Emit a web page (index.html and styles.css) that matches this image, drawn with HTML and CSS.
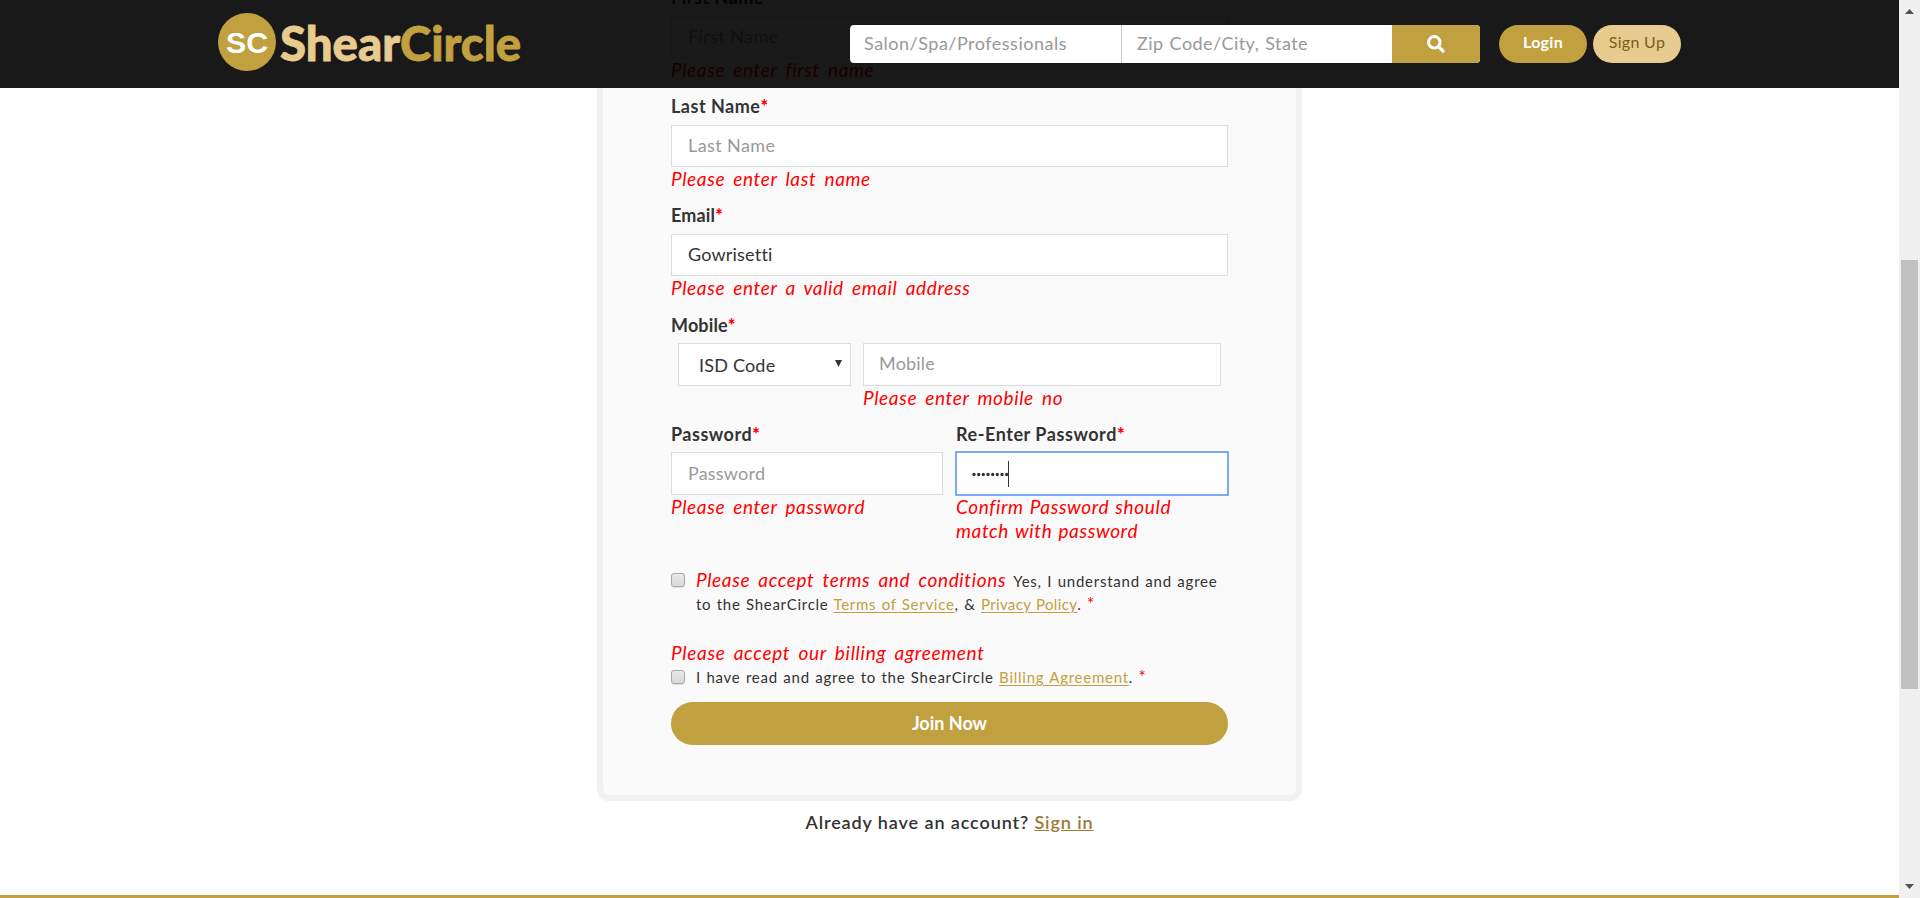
FILE: index.html
```html
<!DOCTYPE html>
<html lang="en">
<head>
<meta charset="utf-8">
<title>ShearCircle - Join</title>
<link rel="stylesheet" href="styles.css">
</head>
<body>
<div class="page">
  <header class="header">
    <svg class="logo" width="306" height="60" viewBox="0 0 306 60" role="img" aria-label="ShearCircle">
      <circle cx="29" cy="29" r="29" fill="#c1a03f"/>
      <text class="logo-mark" x="8" y="39.500" textLength="42" lengthAdjust="spacingAndGlyphs">SC</text>
      <text class="logo-text" x="62" y="47.500" textLength="120" lengthAdjust="spacingAndGlyphs" fill="#e8cb8f" stroke="#e8cb8f">Shear</text>
      <text class="logo-text" x="182" y="47.500" textLength="121" lengthAdjust="spacingAndGlyphs" fill="#c1a03f" stroke="#c1a03f">Circle</text>
    </svg>
    <div class="search">
      <div class="search-field what">Salon/Spa/Professionals</div>
      <div class="search-field where">Zip Code/City, State</div>
      <div class="search-button">
        <svg width="18" height="18" viewBox="0 0 18 18" fill="none" stroke="#fff">
          <circle cx="7.300" cy="7.300" r="5.700" stroke-width="3"/>
          <path d="M11.500 11.500L16 16" stroke-width="3.200" stroke-linecap="round"/>
        </svg>
      </div>
    </div>
    <div class="pill login">Login</div>
    <div class="pill signup">Sign Up</div>
  </header>

  <main class="main">
    <section class="card">
      <div class="field">
        <div class="label">First Name<b>*</b></div>
        <div class="input hint name">First Name</div>
        <div class="error">Please enter first name</div>
      </div>
      <div class="field">
        <div class="label">Last Name<b>*</b></div>
        <div class="input hint name">Last Name</div>
        <div class="error">Please enter last name</div>
      </div>
      <div class="field">
        <div class="label short">Email<b>*</b></div>
        <div class="input">Gowrisetti</div>
        <div class="error">Please enter a valid email address</div>
      </div>
      <div class="field">
        <div class="label short">Mobile<b>*</b></div>
        <div class="phone">
          <div class="input tall select">ISD Code
            <svg width="7" height="7" viewBox="0 0 7 7"><path d="M0 0H7L3.500 7Z" fill="#333"/></svg>
          </div>
          <div>
            <div class="input tall hint">Mobile</div>
            <div class="error">Please enter mobile no</div>
          </div>
        </div>
      </div>
      <div class="passwords">
        <div>
          <div class="label">Password<b>*</b></div>
          <div class="input tall hint">Password</div>
          <div class="error">Please enter password</div>
        </div>
        <div>
          <div class="label long">Re-Enter Password<b>*</b></div>
          <div class="input tall focus">
            <svg width="38" height="26" viewBox="0 0 38 26" fill="#333">
              <circle cx="2" cy="13.500" r="1.650"/><circle cx="6.700" cy="13.500" r="1.650"/><circle cx="11.300" cy="13.500" r="1.650"/><circle cx="16" cy="13.500" r="1.650"/><circle cx="20.700" cy="13.500" r="1.650"/><circle cx="25.300" cy="13.500" r="1.650"/><circle cx="30" cy="13.500" r="1.650"/><circle cx="34.700" cy="13.500" r="1.650"/>
              <path d="M36 0h1v26h-1z"/>
            </svg>
          </div>
          <div class="error tight">Confirm Password should<br>match with password</div>
        </div>
      </div>
      <div class="terms">
        <i class="box"></i>
        <div>
          <div class="line"><span class="error">Please accept terms and conditions</span><span class="gap">Yes, I understand and agree</span></div>
          <div class="line">to the ShearCircle <a>Terms of Service</a>, &amp; <a class="policy">Privacy Policy</a>. <b>*</b></div>
        </div>
      </div>
      <div class="error billing">Please accept our billing agreement</div>
      <div class="terms last">
        <i class="box"></i>
        <div class="line">I have read and agree to the ShearCircle <a>Billing Agreement</a>. <b>*</b></div>
      </div>
      <div class="join">Join Now</div>
    </section>
    <p class="already">Already have an account? <a>Sign in</a></p>
  </main>
  <footer class="footer"></footer>
</div>
<aside class="scrollbar">
  <svg width="9" height="5" viewBox="0 0 9 5"><path d="M0 5L4.500 0L9 5Z" fill="#505050"/></svg>
  <div class="thumb"></div>
  <svg width="9" height="5" viewBox="0 0 9 5"><path d="M0 0L4.500 5L9 0Z" fill="#505050"/></svg>
</aside>
</body>
</html>
```
FILE: styles.css
```css
* { box-sizing: border-box; }
body {
  margin: 0;
  height: 898px;
  overflow: hidden;
  display: flex;
  background: #fff;
  color: #333;
  font: 18px/24px Lato, sans-serif;
}
.page {
  width: 1899px;
  height: 898px;
  overflow: hidden;
  position: relative;
  display: flex;
  flex-direction: column;
}

/* Translucent bar that stays over the scrolled form */
.header {
  position: absolute;
  top: 0;
  left: 0;
  z-index: 2;
  width: 100%;
  height: 88px;
  padding: 0 218px;
  display: flex;
  align-items: flex-start;
  background: rgba(0, 0, 0, .9);
}
.logo { margin-top: 13px; flex: none; }
.logo-mark { font: 700 30px "Liberation Sans", sans-serif; fill: #fff; }
.logo-text { font: 900 47px Lato, sans-serif; stroke-width: .8px; }
.search {
  display: flex;
  width: 630px;
  height: 38px;
  margin: 25px 19px 0 326px;
  border-radius: 4px;
  overflow: hidden;
  background: #fff;
}
.search-field { width: 271px; padding-left: 14px; line-height: 37px; color: #999; }
.what { letter-spacing: .5px; }
.where { border-left: 1px solid #ccc; padding-left: 15px; letter-spacing: .45px; word-spacing: 1px; }
.search-button {
  flex: 1;
  display: flex;
  align-items: center;
  justify-content: center;
  padding-bottom: 1px;
  background: #c1a03f;
}
.pill {
  width: 88px;
  height: 38px;
  margin-top: 25px;
  border-radius: 19px;
  text-align: center;
  font-size: 16px;
  line-height: 33px;
  letter-spacing: .3px;
}
.login { background: #c1a03f; color: #fff; font-weight: 700; }
.signup { margin-left: 6px; background: #e8cb8f; color: #7c5c1c; }

.main { flex: none; width: 705px; height: 895px; margin-left: 597px; }
.card {
  height: 901px;
  margin-top: -100px;
  padding: 79px 68px 0;
  border: 6px solid #f1f1f1;
  border-radius: 12px;
  background: #fafafa;
}
.field { height: 109px; }
.field:nth-child(3) { height: 110px; }
.label {
  height: 24px;
  margin-bottom: 7px;
  font-weight: 700;
  letter-spacing: .5px;
}
.label.short { letter-spacing: .15px; }
.label.long { letter-spacing: .55px; }
.field:nth-child(4) .label, .passwords .label { margin-bottom: 6px; }
b { color: red; }
.input {
  height: 42px;
  padding-left: 16px;
  border: 1px solid #ddd;
  background: #fff;
  line-height: 39px;
  letter-spacing: .2px;
}
.input.tall { height: 43px; line-height: 40px; }
.input.name { letter-spacing: .4px; }
.hint { color: #999; }
.error {
  color: red;
  font-size: 19px;
  line-height: 23px;
  font-style: italic;
  letter-spacing: .63px;
  word-spacing: 3.100px;
  white-space: nowrap;
}
.error.tight { line-height: 24px; word-spacing: 1px; }
.phone {
  display: grid;
  grid-template-columns: 173px 358px;
  gap: 12px;
  padding-left: 7px;
}
.select {
  display: flex;
  justify-content: space-between;
  align-items: center;
  padding: 1px 8px 0 20px;
}
.select svg { margin-bottom: 4px; }
.phone .hint { padding-left: 15px; line-height: 39px; }
.passwords { display: grid; grid-template-columns: 272px 272px; gap: 13px; height: 144px; }
.focus {
  display: flex;
  align-items: center;
  padding-left: 15px;
  outline: 1px solid #7aaaf5;
  border-color: #7aaaf5;
}
.terms {
  display: flex;
  gap: 11px;
  padding-top: 2px;
  font-size: 15px;
  letter-spacing: .71px;
  word-spacing: .9px;
}
.line { height: 24px; white-space: nowrap; }
.gap { margin-left: 7px; letter-spacing: .76px; }
.terms a { color: #c1a03f; text-decoration: underline; text-underline-offset: 2px; }
.terms .policy { letter-spacing: .35px; }
.terms b { font-weight: 400; font-size: 17px; line-height: 1; }
.box {
  flex: none;
  width: 14px;
  height: 14px;
  margin-top: 5px;
  border: 1px solid #a8a8a8;
  border-radius: 3px;
  background: linear-gradient(#e9e9e9, #d9d9d9);
  box-shadow: 0 1px 1px #ddd;
}
.billing { margin-top: 25px; padding-bottom: 1px; letter-spacing: .69px; }
.terms.last { padding-top: 0; letter-spacing: .74px; }
.join {
  height: 43px;
  margin-top: 13px;
  border-radius: 22px;
  background: #c1a03f;
  color: #fff;
  text-align: center;
  font-weight: 700;
  line-height: 42px;
}
.already { margin: 9px 0 0; text-align: center; font-weight: 600; letter-spacing: .9px; }
.already a { color: #9a7a35; text-decoration: underline; }
.footer { flex: none; height: 3px; background: #c1a03f; }

.scrollbar {
  width: 21px;
  height: 898px;
  padding: 9px 0 9px;
  display: flex;
  flex-direction: column;
  align-items: center;
  background: #f0f0f0;
}
.thumb { width: 17px; height: 429px; margin: 246px 0 auto; background: #c1c1c1; }
```
